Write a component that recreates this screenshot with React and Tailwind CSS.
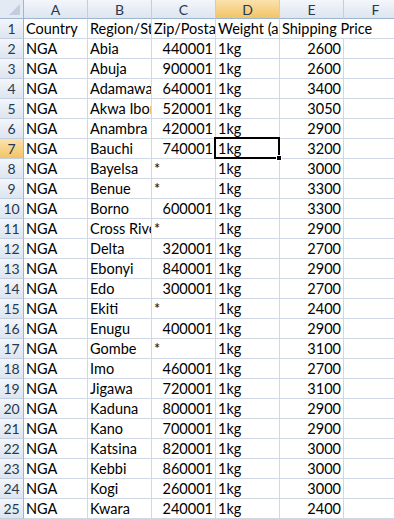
import React from 'react';

const cols = ['A', 'B', 'C', 'D', 'E', 'F'];

const rows = [
  ['Country', 'Region/State', 'Zip/Postal Code', 'Weight (approx)', 'Shipping Price'],
  ['NGA', 'Abia', 440001, '1kg', 2600],
  ['NGA', 'Abuja', 900001, '1kg', 2600],
  ['NGA', 'Adamawa', 640001, '1kg', 3400],
  ['NGA', 'Akwa Ibom', 520001, '1kg', 3050],
  ['NGA', 'Anambra', 420001, '1kg', 2900],
  ['NGA', 'Bauchi', 740001, '1kg', 3200],
  ['NGA', 'Bayelsa', '*', '1kg', 3000],
  ['NGA', 'Benue', '*', '1kg', 3300],
  ['NGA', 'Borno', 600001, '1kg', 3300],
  ['NGA', 'Cross River', '*', '1kg', 2900],
  ['NGA', 'Delta', 320001, '1kg', 2700],
  ['NGA', 'Ebonyi', 840001, '1kg', 2900],
  ['NGA', 'Edo', 300001, '1kg', 2700],
  ['NGA', 'Ekiti', '*', '1kg', 2400],
  ['NGA', 'Enugu', 400001, '1kg', 2900],
  ['NGA', 'Gombe', '*', '1kg', 3100],
  ['NGA', 'Imo', 460001, '1kg', 2700],
  ['NGA', 'Jigawa', 720001, '1kg', 3100],
  ['NGA', 'Kaduna', 800001, '1kg', 2900],
  ['NGA', 'Kano', 700001, '1kg', 2900],
  ['NGA', 'Katsina', 820001, '1kg', 3000],
  ['NGA', 'Kebbi', 860001, '1kg', 3000],
  ['NGA', 'Kogi', 260001, '1kg', 3000],
  ['NGA', 'Kwara', 240001, '1kg', 2400],
];

const hdr = 'bg-gradient-to-b from-[#f3f6fb] to-[#dde5f0] text-[#27384f]';
const hdrSel = 'bg-gradient-to-b from-[#fbe2ae] to-[#f2c463] text-[#27384f]';

export default function App() {
  return (
    <div className="w-[394px] h-[519px] overflow-hidden bg-white font-['Lato','Liberation_Sans',sans-serif]">
      <div className="grid grid-cols-[24px_64px_64px_64px_64px_64px_64px] grid-rows-[19px] auto-rows-[20px]">
        {/* corner */}
        <div className="relative bg-[#e4eaf3] border-r border-b border-[#9eb6ce]">
          <div className="absolute right-[3px] bottom-[3px] w-0 h-0 border-l-[11px] border-l-transparent border-b-[11px] border-b-[#c2cedd]" />
        </div>
        {cols.map((c) => (
          <div
            key={c}
            className={`${c === 'D' ? hdrSel : hdr} border-r border-[#c3cfde] border-b border-b-[#9eb6ce] flex items-center justify-center text-[14px] leading-none pt-[1px]`}
          >
            {c}
          </div>
        ))}
        {rows.map((r, i) => {
          const n = i + 1;
          return (
            <React.Fragment key={n}>
              <div
                className={`${n === 7 ? hdrSel : hdr} border-r border-[#9eb6ce] border-b border-b-[#c3cfde] flex items-center justify-center text-[14px] leading-none pt-[1px]`}
              >
                {n}
              </div>
              {r.map((v, j) => {
                const num = typeof v === 'number';
                const spill = n === 1 && j === 4;
                const sel = n === 7 && j === 3;
                return (
                  <div
                    key={j}
                    className={`relative border-b border-[#d0d7e5] ${spill ? 'z-10' : 'border-r'} ${sel ? 'z-20' : ''} flex items-end`}
                  >
                    <span
                      className={`flex-1 px-[2px] pb-[1px] whitespace-nowrap text-[14.5px] leading-[17px] text-black ${spill ? 'overflow-visible' : 'overflow-hidden'} ${num ? 'text-right' : 'text-left'}`}
                    >
                      {v}
                    </span>
                    {sel && (
                      <div className="absolute -left-[2px] -top-[2px] w-[66px] h-[22px] border-2 border-black">
                        <div className="absolute -right-[4px] -bottom-[4px] w-[6px] h-[6px] bg-black border border-white" />
                      </div>
                    )}
                  </div>
                );
              })}
              <div className="border-r border-b border-[#d0d7e5]" />
            </React.Fragment>
          );
        })}
      </div>
    </div>
  );
}
